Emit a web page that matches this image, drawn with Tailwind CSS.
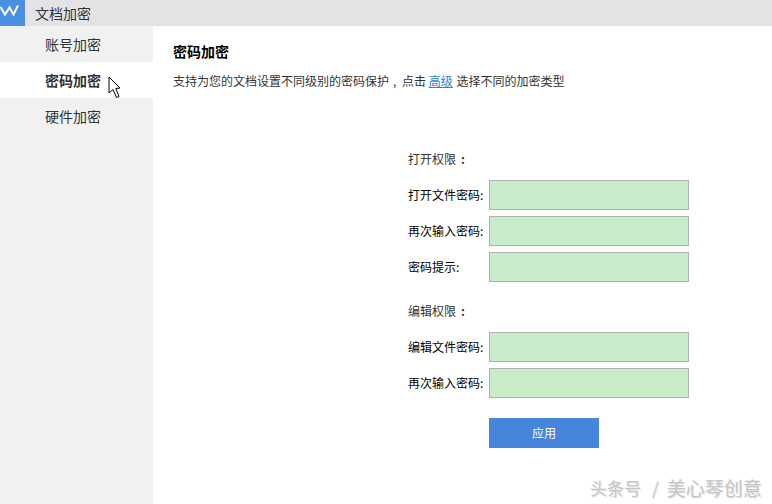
<!DOCTYPE html>
<html lang="zh">
<head>
<meta charset="UTF-8">
<title>文档加密</title>
<script src="https://cdn.jsdelivr.net/npm/@tailwindcss/browser@4"></script>
</head>
<body class="bg-white font-['Noto_Sans_CJK_SC','Liberation_Sans',sans-serif] text-[#333] w-[772px] h-[504px] overflow-hidden relative">
  <!-- title bar -->
  <div class="h-[26px] bg-[#e3e3e5] flex items-center">
    <div class="w-[25px] h-[26px] bg-[#4a90e2]">
      <svg width="25" height="26" viewBox="0 0 25 26" fill="none" stroke="#fff" stroke-width="2"><path d="M0.500 7 L5 14.500 L9.500 7.500 L13.500 14.500 L18 5.500"/></svg>
    </div>
    <span class="ml-[10px] text-[14px] leading-none">文档加密</span>
  </div>
  <div class="flex h-[478px]">
    <!-- sidebar -->
    <div class="w-[153px] bg-[#f1f1f1] text-[14px]">
      <div class="h-[36px] flex items-center pl-[45px]">账号加密</div>
      <div class="h-[36px] flex items-center pl-[45px] bg-white font-bold relative">密码加密
        <svg class="absolute left-[108px] top-[14px]" width="13" height="23" viewBox="0 0 13 23"><path d="M1 1 L1 17 L5 13.500 L8.500 21.500 L11 20.500 L7.800 12.500 L12 12 Z" fill="#fff" stroke="#000" stroke-width="1"/></svg>
      </div>
      <div class="h-[36px] flex items-center pl-[45px]">硬件加密</div>
    </div>
    <!-- content -->
    <div class="flex-1 pl-[20px] pt-[15px]">
      <h1 class="text-[14px] leading-[20px] font-bold text-black">密码加密</h1>
      <p class="text-[12px] leading-[18px] mt-[11px] whitespace-nowrap">支持为您的文档设置不同级别的密码保护<span class="inline-block w-[13px] pl-[4px]">,</span>点击 <a class="text-[#2f7fd8] underline mr-[1px]">高级</a> 选择不同的加密类型</p>
      <div class="ml-[235px] mt-[60px] text-[12px] text-black">
        <div class="h-[18px] leading-[18px] text-[#333] mb-[12px]">打开权限<span class="ml-[5px] font-bold">:</span></div>
        <div class="flex flex-col gap-[6px]">
          <div class="flex items-center"><label class="w-[81px]">打开文件密码:</label><input class="w-[200px] h-[30px] bg-[#c9edcb] border border-[#b0b0b0]"></div>
          <div class="flex items-center"><label class="w-[81px]">再次输入密码:</label><input class="w-[200px] h-[30px] bg-[#c9edcb] border border-[#b0b0b0]"></div>
          <div class="flex items-center"><label class="w-[81px]">密码提示:</label><input class="w-[200px] h-[30px] bg-[#c9edcb] border border-[#b0b0b0]"></div>
        </div>
        <div class="h-[18px] leading-[18px] text-[#333] mt-[20px] mb-[12px]">编辑权限<span class="ml-[5px] font-bold">:</span></div>
        <div class="flex flex-col gap-[6px]">
          <div class="flex items-center"><label class="w-[81px]">编辑文件密码:</label><input class="w-[200px] h-[30px] bg-[#c9edcb] border border-[#b0b0b0]"></div>
          <div class="flex items-center"><label class="w-[81px]">再次输入密码:</label><input class="w-[200px] h-[30px] bg-[#c9edcb] border border-[#b0b0b0]"></div>
        </div>
        <button class="block ml-[81px] mt-[20px] w-[110px] h-[30px] bg-[#4585dc] text-white text-[12px]">应用</button>
      </div>
    </div>
  </div>
  <div class="absolute left-[590px] top-[475px] h-[26px] flex items-center text-[19px] text-[#c6c6c6] [text-shadow:1px_1px_0_#e4e4e4] whitespace-nowrap"><span class="text-[17px]">头条号</span><span class="ml-[11px] mr-[8px] text-[17px]">/</span><span>美心琴创意</span></div>
</body>
</html>
